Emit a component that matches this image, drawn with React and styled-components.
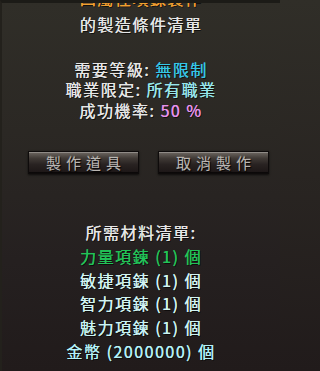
import React from "react";
import styled, { createGlobalStyle } from "styled-components";

const GlobalStyle = createGlobalStyle`
  html, body {
    margin: 0;
    padding: 0;
    background: linear-gradient(180deg, #302e28 0%, #211b1b 100%) fixed;
  }
`;

const Panel = styled.section`
  width: 280px;
  height: 371px;
  overflow: hidden;
  box-sizing: border-box;
  border-top: 3px solid #1c1b17;
  border-left: 2px solid #23211c;
  background: linear-gradient(180deg, #302e28 0%, #2b2824 35%, #252020 70%, #211b1b 100%);
  font-family: "Noto Sans CJK TC", "Noto Sans", sans-serif;
  color: #e6e6e6;
  text-align: center;
`;

const Line = styled.div`
  font-size: 16px;
  line-height: ${(p) => p.$lh || 20.5}px;
  letter-spacing: 1.5px;
  white-space: nowrap;
  color: ${(p) => p.$color || "#e6e6e6"};
  text-shadow: 0.2px 0 0, 1px 1px 0 rgba(0, 0, 0, 0.6);
`;

const Clipped = styled(Line)`
  margin-top: -15px;
  color: #f0a030;
`;

const Title = styled(Line)`
  margin-top: 5px;
`;

const InfoBlock = styled.div`
  margin-top: 25px;
`;

const Value = styled.span`
  color: ${(p) => p.$color};
`;

const ButtonRow = styled.div`
  display: flex;
  gap: 19px;
  padding-left: 26px;
  margin-top: 31px;
`;

const Button = styled.button`
  width: 111px;
  height: 23px;
  padding: 0 0 0 5px;
  box-sizing: border-box;
  border: 1px solid #0e0b0b;
  background: linear-gradient(180deg, #6e6862 0%, #403a36 30%, #282221 60%, #1c1616 100%);
  box-shadow: inset 0 1px 0 rgba(255, 255, 255, 0.25), inset 0 -1px 0 rgba(0, 0, 0, 0.6),
    0 1px 2px rgba(0, 0, 0, 0.7);
  font-family: "Noto Sans CJK TC", "Noto Sans", sans-serif;
  font-size: 15px;
  line-height: 21px;
  letter-spacing: 5px;
  color: #bab6b2;
  text-shadow: 0 -1px 0 rgba(255, 255, 255, 0.15), 1px 1px 1px #000;
  cursor: pointer;
`;

const Materials = styled.div`
  margin-top: 47px;
`;

const info = [
  { label: "需要等級: ", value: "無限制", color: "#35c6e6" },
  { label: "職業限定: ", value: "所有職業", color: "#98e6ea" },
  { label: "成功機率: ", value: "50 %", color: "#e492ea" },
];

const materials = [
  { text: "力量項鍊 (1) 個", color: "#22c258" },
  { text: "敏捷項鍊 (1) 個", color: "#d2f4f2" },
  { text: "智力項鍊 (1) 個", color: "#d2f4f2" },
  { text: "魅力項鍊 (1) 個", color: "#c8f2f2" },
  { text: "金幣 (2000000) 個", color: "#b4f0f6" },
];

export default function App() {
  return (
    <>
      <GlobalStyle />
      <Panel>
        <Clipped>四屬性項鍊製作</Clipped>
        <Title $lh={20}>的製造條件清單</Title>
        <InfoBlock>
          {info.map((row) => (
            <Line key={row.label}>
              {row.label}
              <Value $color={row.color}>{row.value}</Value>
            </Line>
          ))}
        </InfoBlock>
        <ButtonRow>
          <Button>製作道具</Button>
          <Button>取消製作</Button>
        </ButtonRow>
        <Materials>
          <Line $lh={23.8}>所需材料清單:</Line>
          {materials.map((m) => (
            <Line key={m.text} $lh={23.8} $color={m.color}>
              {m.text}
            </Line>
          ))}
        </Materials>
      </Panel>
    </>
  );
}
